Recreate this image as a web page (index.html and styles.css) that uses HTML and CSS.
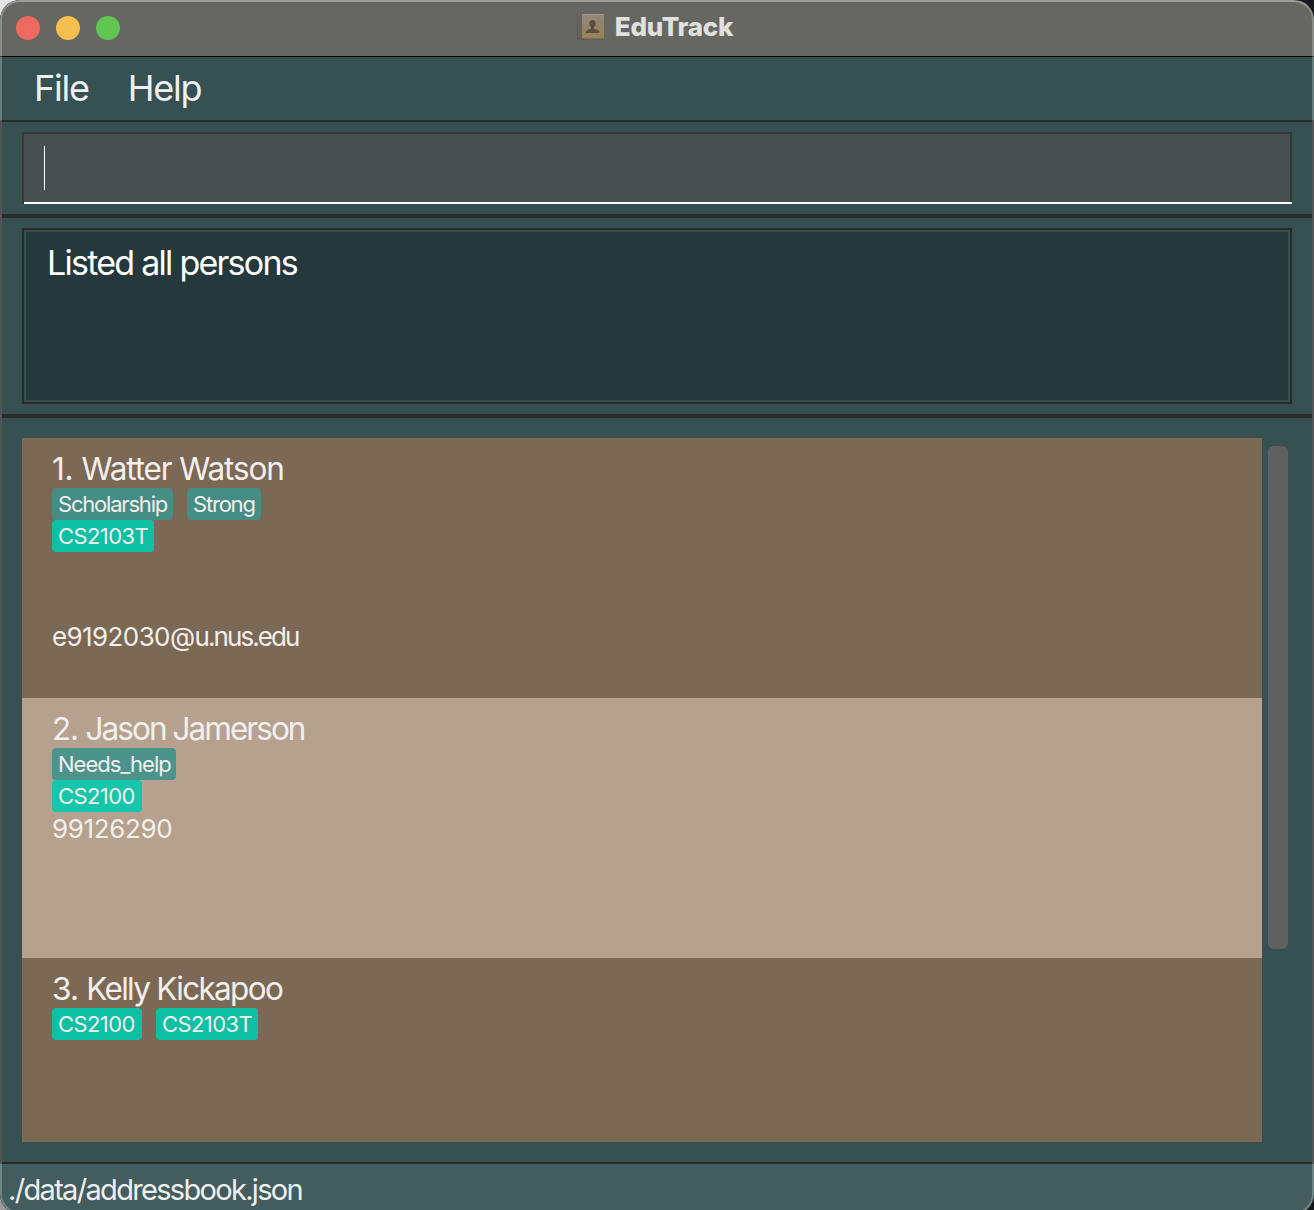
FILE: index.html
```html
<!DOCTYPE html>
<html lang="en">
<head>
<meta charset="utf-8">
<title>EduTrack</title>
<link rel="stylesheet" href="styles.css">
</head>
<body>
<div class="window">
  <header class="titlebar">
    <div class="lights"><i class="light close"></i><i class="light minimize"></i><i class="light zoom"></i></div>
    <div class="title">
      <svg class="book" width="30" height="28" viewBox="0 0 30 28">
        <defs>
          <linearGradient id="cover" x1="0" y1="0" x2="0" y2="1"><stop offset="0" stop-color="#94897a"/><stop offset=".5" stop-color="#92846b"/><stop offset="1" stop-color="#998355"/></linearGradient>
        </defs>
        <rect x="1" y="1" width="27" height="25.500" rx="1" fill="#5b5752"/>
        <rect x="2" y="1" width="4" height="24" fill="#67605c"/>
        <rect x="6" y="1" width="22" height="24.500" fill="url(#cover)"/>
        <path d="M6 1h22v1H6z" fill="#a09788"/>
        <path d="M16.500 7c-2.300 0-3.400 1.600-3.200 3.700.1 1.500.8 2.600 1.700 3.400v1.500c-1.500 1-5.300 1.200-5.600 4.400h14.200c-.3-3.200-4.100-3.400-5.600-4.400v-1.500c.9-.8 1.600-1.900 1.700-3.400.2-2.100-.9-3.700-3.200-3.700z" fill="#5c5140"/>
      </svg>
      <span class="title-text">EduTrack</span>
    </div>
  </header>
  <nav class="menubar"><span class="menu-item">File</span><span class="menu-item">Help</span></nav>
  <section class="command-pane"><div class="command-box"><i class="caret"></i></div></section>
  <section class="result-pane"><div class="result-box"><div class="result-text">Listed all persons</div></div></section>
  <main class="list-pane">
    <div class="persons">
      <article class="person odd">
        <h2 class="name watter"><span class="num">1. </span>Watter Watson</h2>
        <div class="tags"><span class="tag t-scholarship">Scholarship</span><span class="tag t-strong">Strong</span></div>
        <div class="tags"><span class="tag module m-long">CS2103T</span></div>
        <p class="detail email">e9192030@<span class="domain">u.nus.edu</span></p>
      </article>
      <article class="person even">
        <h2 class="name jason"><span class="num">2. </span>Jason Jamerson</h2>
        <div class="tags"><span class="tag t-help">Needs_help</span></div>
        <div class="tags"><span class="tag module m-short">CS2100</span></div>
        <p class="detail phone">99126290</p>
      </article>
      <article class="person odd">
        <h2 class="name kelly"><span class="num">3. </span>Kelly Kickapoo</h2>
        <div class="tags"><span class="tag module m-short">CS2100</span><span class="tag module m-long">CS2103T</span></div>
      </article>
    </div>
    <div class="scrollbar"></div>
  </main>
  <footer class="statusbar">./data/addressbook.json</footer>
  <div class="frame"><i class="edge-top"></i><i class="edge-mid"></i><i class="edge-bottom"></i></div>
</div>
</body>
</html>
```
FILE: styles.css
```css
* { box-sizing: border-box; }

body {
  margin: 0;
  width: 1314px;
  height: 1210px;
  overflow: hidden;
  background: linear-gradient(90deg, transparent 50%, #17181c 50%), linear-gradient(#e4e4e4 50%, #9a9a9a 50%);
  font-family: Inter, "Liberation Sans", sans-serif;
  font-weight: 400;
  color: #edf0f0;
}

.window {
  position: relative;
  display: flex;
  flex-direction: column;
  width: 1314px;
  height: 1214px;
  border-radius: 20px;
  overflow: hidden;
  background: #375051;
}

.titlebar {
  display: grid;
  grid-template-columns: 1fr auto 1fr;
  align-items: center;
  height: 57px;
  padding: 0 4px 1px 16px;
  background: #666663;
  border-bottom: 1px solid #000;
}
.lights { display: flex; gap: 16px; }
.light { width: 24px; height: 24px; border-radius: 50%; }
.close { background: #ee6a5f; }
.minimize { background: #f5bf4f; }
.zoom { background: #61c554; }
.title {
  display: flex;
  align-items: center;
  gap: 9px;
  height: 55px;
  margin: -2px 0 0 -17px;
}
.title-text { font-size: 26px; font-weight: 800; line-height: 54px; letter-spacing: -.25px; color: #e0e0df; }

.menubar {
  display: flex;
  gap: 39px;
  height: 65px;
  padding-left: 34px;
  border-bottom: 2px solid #2b2b2b;
  font-size: 36px;
  line-height: 63px;
  letter-spacing: -1.25px;
}

.command-pane {
  height: 96px;
  padding: 10px 22px;
  border-bottom: 4px solid #2b2b2b;
}
/* White underline first, then the field fill, over the dark outline colour. */
.command-box {
  height: 72px;
  padding: 14px 22px;
  background:
    linear-gradient(#fff, #fff) 2px 70px / 1268px 2px no-repeat,
    linear-gradient(#474f50, #474f50) 2px 2px / 1266px 68px no-repeat,
    #383838;
}
.caret { display: block; width: 1px; height: 44px; background: #fff; }

.result-pane {
  height: 200px;
  padding: 10px 22px;
  border-bottom: 4px solid #2b2b2b;
}
.result-box {
  height: 176px;
  border: 2px solid #2b2b2b;
  padding: 2px;
}
.result-text {
  height: 168px;
  padding: 9px 21px;
  background: #25383b;
  color: #fff;
  font-size: 34px;
  line-height: 44px;
  letter-spacing: -1.74px;
}

.list-pane {
  display: flex;
  gap: 6px;
  height: 746px;
  padding: 20px 22px;
  border-bottom: 2px solid #2b2b2b;
}
.persons { width: 1240px; height: 704px; overflow: hidden; }
.person { height: 260px; padding: 10px 30px; color: #f2efed; }
.odd { background: #7c6955; }
.even { background: #b5a18d; }
.name { height: 40px; margin: 0; font-size: 31.5px; font-weight: 400; line-height: 42px; }
.num { letter-spacing: -.4px; }
.watter { letter-spacing: -1.15px; }
.jason { letter-spacing: -1.95px; }
.jason .num { letter-spacing: -1.2px; }
.kelly { letter-spacing: -1.7px; }
.kelly .num { letter-spacing: -.8px; }
.tags { display: flex; gap: 14px; height: 32px; }
.tag {
  height: 32px;
  padding-left: 6px;
  border-radius: 4px;
  background: #458c84;
  font-size: 22px;
  line-height: 32px;
  white-space: nowrap;
}
.even .tag { background: #4b938b; }
.tag.module { background: #0dbfa3; letter-spacing: -.6px; }
.even .tag.module { background: #15c6aa; }
.t-scholarship { width: 121px; letter-spacing: -1.2px; }
.t-strong { width: 74px; letter-spacing: -1.2px; }
.t-help { width: 124px; letter-spacing: -1px; }
.m-long { width: 102px; }
.m-short { width: 90px; }
.detail { margin: 0; height: 34px; font-size: 26px; line-height: 34px; letter-spacing: -.35px; }
.email { margin-top: 68px; letter-spacing: -.6px; }
.domain { letter-spacing: -1.9px; }

.scrollbar {
  width: 20px;
  height: 503px;
  margin-top: 8px;
  border-radius: 6px;
  background: #606060;
}

.statusbar {
  height: 50px;
  padding-left: 8px;
  background: #435c5d;
  font-size: 29px;
  line-height: 52px;
  letter-spacing: -1.68px;
}

.frame {
  position: absolute;
  inset: 0;
  display: flex;
  flex-direction: column;
  border-radius: 20px;
  overflow: hidden;
}
.edge-top, .edge-bottom { border: 2px solid rgba(255, 255, 255, .25); }
.edge-top { height: 120px; border-bottom: 0; border-radius: 20px 20px 0 0; border-top-color: rgba(255, 255, 255, .35); }
.edge-mid { height: 1044px; border: solid #555; border-width: 0 2px; }
.edge-bottom { height: 50px; border-top: 0; border-radius: 0 0 20px 20px; }
```
